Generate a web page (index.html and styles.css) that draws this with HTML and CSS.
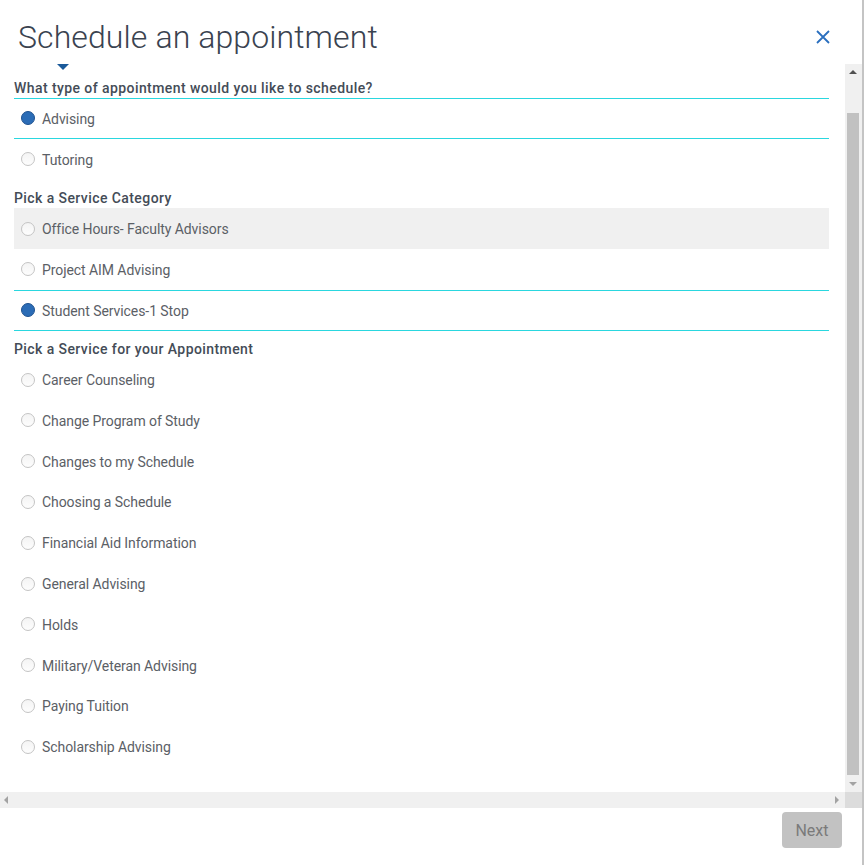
FILE: index.html
```html
<!DOCTYPE html>
<html>
<head>
<meta charset="utf-8">
<link rel="stylesheet" href="styles.css">
</head>
<body>
<div class="modal">
  <header class="head">
    <h1 class="title">Schedule an appointment</h1>
    <button class="close" aria-label="Close">
      <svg width="14" height="14" viewBox="0 0 14 14"><path d="M1 1 L13 13 M13 1 L1 13" stroke="#2a6fbf" stroke-width="1.8" fill="none"/></svg>
    </button>
  </header>
  <div class="scroller">
    <div class="viewport">
      <div class="content">
        <div class="caret"></div>
        <h2 class="group-title first">What type of appointment would you like to schedule?</h2>
        <div class="row selected"><span class="radio on"></span>Advising</div>
        <div class="row"><span class="radio"></span>Tutoring</div>

        <h2 class="group-title">Pick a Service Category</h2>
        <div class="row hover"><span class="radio"></span>Office Hours- Faculty Advisors</div>
        <div class="row"><span class="radio"></span>Project AIM Advising</div>
        <div class="row selected"><span class="radio on"></span>Student Services-1 Stop</div>

        <h2 class="group-title">Pick a Service for your Appointment</h2>
        <div class="row"><span class="radio"></span>Career Counseling</div>
        <div class="row"><span class="radio"></span>Change Program of Study</div>
        <div class="row"><span class="radio"></span>Changes to my Schedule</div>
        <div class="row"><span class="radio"></span>Choosing a Schedule</div>
        <div class="row"><span class="radio"></span>Financial Aid Information</div>
        <div class="row"><span class="radio"></span>General Advising</div>
        <div class="row"><span class="radio"></span>Holds</div>
        <div class="row"><span class="radio"></span>Military/Veteran Advising</div>
        <div class="row"><span class="radio"></span>Paying Tuition</div>
        <div class="row"><span class="radio"></span>Scholarship Advising</div>
      </div>
      <div class="vbar">
        <span class="arrow up"></span>
        <span class="thumb"></span>
        <span class="arrow down"></span>
      </div>
    </div>
    <div class="hbar">
      <div class="htrack">
        <span class="arrow left"></span>
        <span class="arrow right"></span>
      </div>
      <div class="corner"></div>
    </div>
  </div>
  <footer class="foot">
    <button class="next" disabled>Next</button>
  </footer>
</div>
</body>
</html>
```

FILE: styles.css
```css
* { box-sizing: border-box; }
html, body { margin: 0; padding: 0; background: #fff; }
body { font-family: Roboto, "Noto Sans", Arial, sans-serif; }

.modal {
  width: 864px;
  height: 865px;
  border-right: 2px solid #c4c4c4;
  display: flex;
  flex-direction: column;
  overflow: hidden;
}

.head {
  height: 64px;
  display: flex;
  align-items: flex-start;
  justify-content: space-between;
  padding: 0 32px 0 18px;
}
.title {
  margin: 17px 0 0 0;
  font-family: Roboto, sans-serif;
  font-weight: 300;
  font-size: 32px;
  line-height: 40px;
  color: #3a4350;
  letter-spacing: 0.1px;
}
.close {
  margin-top: 30px;
  border: 0;
  background: none;
  padding: 0;
  width: 14px;
  height: 14px;
  display: flex;
}

.scroller {
  height: 744px;
  display: flex;
  flex-direction: column;
}
.viewport {
  flex: 1;
  display: flex;
  overflow: hidden;
}
.content {
  width: 845px;
  padding: 0 16px 0 14px;
  overflow: hidden;
}
.caret {
  width: 0;
  height: 0;
  margin-left: 43px;
  border-left: 6px solid transparent;
  border-right: 6px solid transparent;
  border-top: 6px solid #1a5a9a;
}
.group-title {
  margin: 8.6px 0 0 0;
  font-size: 14px;
  font-weight: 500;
  line-height: 20px;
  height: 20px;
  color: #444c57;
  letter-spacing: 0.42px;
}
.group-title.first { margin-top: 8px; }

.row {
  height: 40.8px;
  display: flex;
  align-items: center;
  padding-left: 7px;
  padding-top: 1px;
  border-top: 1px solid transparent;
  border-bottom: 1px solid transparent;
  font-size: 14px;
  color: #5b6066;
  letter-spacing: -0.07px;
}
.row.selected {
  border-top-color: #2ad7df;
  border-bottom-color: #2ad7df;
}
.row.hover { background: #f0f0f0; }

.radio {
  width: 14px;
  height: 14px;
  border-radius: 50%;
  border: 1px solid #c4c4c4;
  background: linear-gradient(#f4f4f4, #fdfdfd);
  margin-right: 7px;
  margin-top: -1px;
  flex: none;
}
.radio.on {
  background: #2b6cb6;
  border-color: #1f5290;
}

.vbar {
  width: 17px;
  background: #f0f0f0;
  position: relative;
}
.thumb {
  position: absolute;
  left: 2px;
  top: 49px;
  width: 12px;
  height: 662px;
  background: #c1c1c1;
}
.arrow {
  position: absolute;
  width: 0;
  height: 0;
}
.arrow.up {
  left: 4px;
  top: 6px;
  border-left: 4px solid transparent;
  border-right: 4px solid transparent;
  border-bottom: 4px solid #505050;
}
.arrow.down {
  left: 4px;
  bottom: 6px;
  border-left: 4px solid transparent;
  border-right: 4px solid transparent;
  border-top: 4px solid #a3a3a3;
}
.hbar {
  height: 16px;
  display: flex;
}
.htrack {
  width: 845px;
  background: #f0f0f0;
  position: relative;
}
.arrow.left {
  left: 4px;
  top: 4px;
  border-top: 4px solid transparent;
  border-bottom: 4px solid transparent;
  border-right: 4px solid #a3a3a3;
}
.arrow.right {
  right: 6px;
  top: 4px;
  border-top: 4px solid transparent;
  border-bottom: 4px solid transparent;
  border-left: 4px solid #a3a3a3;
}
.corner {
  width: 17px;
  background: #dcdcdc;
}

.foot {
  flex: 1;
  display: flex;
  justify-content: flex-end;
  align-items: flex-start;
  padding: 4px 20px 0 0;
}
.next {
  width: 60px;
  height: 36px;
  border: 0;
  border-radius: 4px;
  background: #c2c2c2;
  color: #7a7a7a;
  font-family: Roboto, sans-serif;
  font-size: 16px;
  padding: 0;
}
```
